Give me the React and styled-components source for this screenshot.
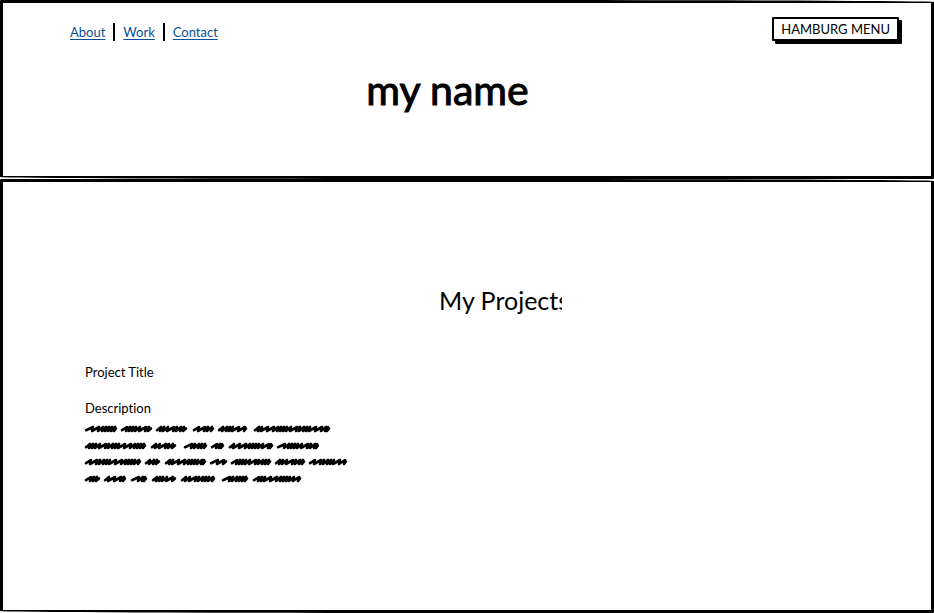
import React from "react";
import styled, { createGlobalStyle } from "styled-components";

const GlobalStyle = createGlobalStyle`
  *, *::before, *::after { box-sizing: border-box; }
  html, body, #root { height: 100%; }
  body {
    margin: 0;
    background: #fff;
    color: #000;
    font: 13px/18px Lato, sans-serif;
    font-variant-ligatures: none;
  }
  h1, h2, h3, p { margin: 0; font-weight: 400; }
`;

const Page = styled.div`
  display: flex;
  flex-direction: column;
  min-height: 100%;
`;

const Panel = styled.section`
  flex: ${({ $grow }) => ($grow ? 1 : "none")};
  display: flex;
  flex-direction: column;
  border: 3px solid #000;
  border-radius: 1px 50% 1px 50% / 1px 2px 1px 2px;
`;

const Header = styled(Panel).attrs({ as: "header" })`
  padding: 14px 32px 62px 67px;
`;

const Projects = styled(Panel).attrs({ as: "main" })`
  padding: 102px 15px 64px 82px;
`;

const TopBar = styled.div`
  display: flex;
  justify-content: space-between;
  align-items: flex-start;
`;

const Nav = styled.nav`
  display: flex;
  align-items: center;
  padding-top: 6px;
`;

const NavItem = styled.span`
  padding: 0 8px 0 0;
  & + & {
    border-left: 2px solid #000;
    padding-left: 8px;
  }
`;

const NavLink = styled.a`
  color: #0a4f94;
  text-underline-offset: 2px;
`;

const MenuButton = styled.button`
  height: 24px;
  padding: 0 7px;
  border: 2px solid #000;
  border-radius: 1px;
  background: #fff;
  color: #000;
  box-shadow: 3px 3px 0 #000;
  font: 13px/18px Lato, sans-serif;
`;

const Name = styled.h1`
  align-self: center;
  margin-top: 25px;
  padding-right: 74px;
  font-size: 41px;
  line-height: 48px;
  -webkit-text-stroke: 1px #000;
`;

const Heading = styled.h2`
  align-self: center;
  width: 123px;
  overflow: hidden;
  white-space: nowrap;
  font-size: 25px;
  line-height: 32px;
`;

const Project = styled.article`
  display: flex;
  flex-direction: column;
  align-items: flex-start;
  margin-top: 47px;
`;

const ProjectTitle = styled.h3`
  font-size: 13px;
`;

const Description = styled.p`
  margin-top: 18px;
`;

const Scribble = styled.svg`
  display: block;
  width: 264px;
  height: 66px;
  margin-top: 3px;
  overflow: visible;
  fill: none;
  stroke: #000;
  stroke-width: 2.6;
  stroke-linecap: round;
  stroke-linejoin: round;
`;

const scribbleRows = [
  { y: 9, words: [[0, 32], [36, 67], [71, 102], [108, 129], [133, 162], [169, 245]] },
  { y: 26, words: [[0, 61], [66, 91], [99, 122], [126, 139], [144, 188], [192, 234]] },
  { y: 42, words: [[0, 56], [60, 75], [80, 121], [125, 142], [146, 186], [190, 220], [224, 262]] },
  { y: 59, words: [[0, 15], [19, 41], [46, 62], [67, 91], [96, 130], [137, 163], [168, 216]] },
];

const strides = [6, 6, 4, 3, 3, 3, 4, 6, 3, 4, 3, 3];

function scribbleWord(start, end, y, seed) {
  let x = start + 1;
  let path = `M${x} ${y + 1.2}`;
  for (let i = seed; x + 4 < end; i += 1) {
    const stride = strides[i % strides.length];
    const top = Math.min(x + stride + 1, end - 2);
    path += `L${top} ${y - 2}L${top - 1} ${y + 2}`;
    x += stride;
  }
  return `${path}L${end - 1} ${y - 0.5}`;
}

export default function App() {
  return (
    <>
      <GlobalStyle />
      <Page>
        <Header>
          <TopBar>
            <Nav>
              <NavItem><NavLink href="#about">About</NavLink></NavItem>
              <NavItem><NavLink href="#work">Work</NavLink></NavItem>
              <NavItem><NavLink href="#contact">Contact</NavLink></NavItem>
            </Nav>
            <MenuButton type="button">HAMBURG MENU</MenuButton>
          </TopBar>
          <Name>my name</Name>
        </Header>
        <Projects $grow>
          <Heading>My Projects</Heading>
          <Project>
            <ProjectTitle>Project Title</ProjectTitle>
            <Description>Description</Description>
            <Scribble viewBox="0 0 264 66" aria-hidden="true">
              {scribbleRows.map(({ y, words }, row) =>
                words.map(([start, end], i) => (
                  <path key={`${row}-${start}`} d={scribbleWord(start, end, y, row * 3 + i * 2)} />
                ))
              )}
            </Scribble>
          </Project>
        </Projects>
      </Page>
    </>
  );
}
